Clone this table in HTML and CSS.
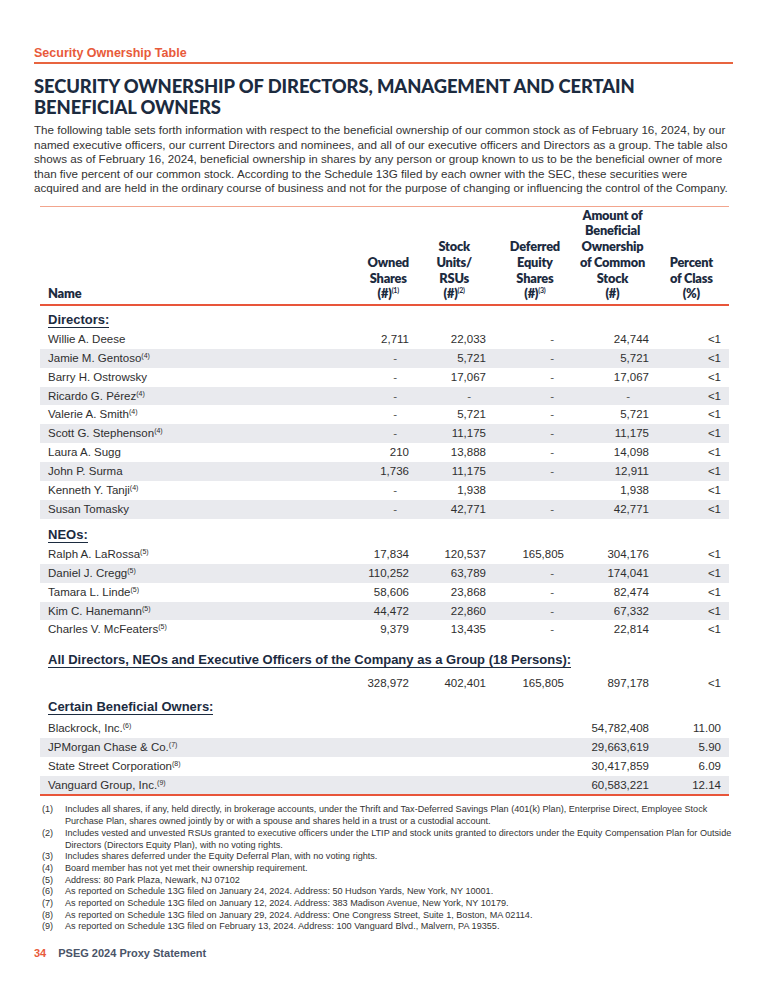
FILE: index.html
```html
<!DOCTYPE html>
<html lang="en">
<head>
<meta charset="utf-8">
<title>Security Ownership Table</title>
<link rel="stylesheet" href="styles.css">
</head>
<body>
<div class="page">
  <div class="section-label">Security Ownership Table</div>
  <h1 class="title">SECURITY OWNERSHIP OF DIRECTORS, MANAGEMENT AND CERTAIN<br>BENEFICIAL OWNERS</h1>
  <p class="intro">The following table sets forth information with respect to the beneficial ownership of our common stock as of February 16, 2024, by our<br>named executive officers, our current Directors and nominees, and all of our executive officers and Directors as a group. The table also<br>shows as of February 16, 2024, beneficial ownership in shares by any person or group known to us to be the beneficial owner of more<br>than five percent of our common stock. According to the Schedule 13G filed by each owner with the SEC, these securities were<br>acquired and are held in the ordinary course of business and not for the purpose of changing or influencing the control of the Company.</p>

  <table class="own">
    <colgroup>
      <col class="c-name"><col class="c-owned"><col class="c-stock"><col class="c-def"><col class="c-amt"><col class="c-pct">
    </colgroup>
    <thead>
      <tr>
        <th class="h-name">Name</th>
        <th class="h-owned"><span>Owned<br>Shares<br>(#)<sup>(1)</sup></span></th>
        <th class="h-stock"><span>Stock<br>Units/<br>RSUs<br>(#)<sup>(2)</sup></span></th>
        <th class="h-def"><span>Deferred<br>Equity<br>Shares<br>(#)<sup>(3)</sup></span></th>
        <th class="h-amt"><span>Amount of<br>Beneficial<br>Ownership<br>of Common<br>Stock<br>(#)</span></th>
        <th class="h-pct"><span>Percent<br>of Class<br>(%)</span></th>
      </tr>
    </thead>
    <tbody>
      <tr class="sec sec-dir"><td colspan="6"><span>Directors:</span></td></tr>
      <tr><td>Willie A. Deese</td><td>2,711</td><td>22,033</td><td class="dash d-def">-</td><td>24,744</td><td>&lt;1</td></tr>
      <tr class="alt"><td>Jamie M. Gentoso<sup>(4)</sup></td><td class="dash d-own">-</td><td>5,721</td><td class="dash d-def">-</td><td>5,721</td><td>&lt;1</td></tr>
      <tr><td>Barry H. Ostrowsky</td><td class="dash d-own">-</td><td>17,067</td><td class="dash d-def">-</td><td>17,067</td><td>&lt;1</td></tr>
      <tr class="alt"><td>Ricardo G. Pérez<sup>(4)</sup></td><td class="dash d-own">-</td><td class="dash d-stock">-</td><td class="dash d-def">-</td><td class="dash d-amt">-</td><td>&lt;1</td></tr>
      <tr><td>Valerie A. Smith<sup>(4)</sup></td><td class="dash d-own">-</td><td>5,721</td><td class="dash d-def">-</td><td>5,721</td><td>&lt;1</td></tr>
      <tr class="alt"><td>Scott G. Stephenson<sup>(4)</sup></td><td class="dash d-own">-</td><td>11,175</td><td class="dash d-def">-</td><td>11,175</td><td>&lt;1</td></tr>
      <tr><td>Laura A. Sugg</td><td>210</td><td>13,888</td><td class="dash d-def">-</td><td>14,098</td><td>&lt;1</td></tr>
      <tr class="alt"><td>John P. Surma</td><td>1,736</td><td>11,175</td><td class="dash d-def">-</td><td>12,911</td><td>&lt;1</td></tr>
      <tr><td>Kenneth Y. Tanji<sup>(4)</sup></td><td class="dash d-own">-</td><td>1,938</td><td></td><td>1,938</td><td>&lt;1</td></tr>
      <tr class="alt"><td>Susan Tomasky</td><td class="dash d-own">-</td><td>42,771</td><td class="dash d-def">-</td><td>42,771</td><td>&lt;1</td></tr>

      <tr class="sec sec-neo"><td colspan="6"><span>NEOs:</span></td></tr>
      <tr><td>Ralph A. LaRossa<sup>(5)</sup></td><td>17,834</td><td>120,537</td><td>165,805</td><td>304,176</td><td>&lt;1</td></tr>
      <tr class="alt"><td>Daniel J. Cregg<sup>(5)</sup></td><td>110,252</td><td>63,789</td><td class="dash d-def">-</td><td>174,041</td><td>&lt;1</td></tr>
      <tr><td>Tamara L. Linde<sup>(5)</sup></td><td>58,606</td><td>23,868</td><td class="dash d-def">-</td><td>82,474</td><td>&lt;1</td></tr>
      <tr class="alt"><td>Kim C. Hanemann<sup>(5)</sup></td><td>44,472</td><td>22,860</td><td class="dash d-def">-</td><td>67,332</td><td>&lt;1</td></tr>
      <tr><td>Charles V. McFeaters<sup>(5)</sup></td><td>9,379</td><td>13,435</td><td class="dash d-def">-</td><td>22,814</td><td>&lt;1</td></tr>

      <tr class="sec sec-all"><td colspan="6"><span>All Directors, NEOs and Executive Officers of the Company as a Group (18 Persons):</span></td></tr>
      <tr class="total"><td></td><td>328,972</td><td>402,401</td><td>165,805</td><td>897,178</td><td>&lt;1</td></tr>

      <tr class="sec sec-ben"><td colspan="6"><span>Certain Beneficial Owners:</span></td></tr>
      <tr><td>Blackrock, Inc.<sup>(6)</sup></td><td></td><td></td><td></td><td>54,782,408</td><td>11.00</td></tr>
      <tr class="alt"><td>JPMorgan Chase &amp; Co.<sup>(7)</sup></td><td></td><td></td><td></td><td>29,663,619</td><td>5.90</td></tr>
      <tr><td>State Street Corporation<sup>(8)</sup></td><td></td><td></td><td></td><td>30,417,859</td><td>6.09</td></tr>
      <tr class="alt last"><td>Vanguard Group, Inc.<sup>(9)</sup></td><td></td><td></td><td></td><td>60,583,221</td><td>12.14</td></tr>
    </tbody>
  </table>

  <ol class="notes">
    <li><span class="num">(1)</span><span class="txt">Includes all shares, if any, held directly, in brokerage accounts, under the Thrift and Tax-Deferred Savings Plan (401(k) Plan), Enterprise Direct, Employee Stock<br>Purchase Plan, shares owned jointly by or with a spouse and shares held in a trust or a custodial account.</span></li>
    <li><span class="num">(2)</span><span class="txt">Includes vested and unvested RSUs granted to executive officers under the LTIP and stock units granted to directors under the Equity Compensation Plan for Outside<br>Directors (Directors Equity Plan), with no voting rights.</span></li>
    <li><span class="num">(3)</span><span class="txt">Includes shares deferred under the Equity Deferral Plan, with no voting rights.</span></li>
    <li><span class="num">(4)</span><span class="txt">Board member has not yet met their ownership requirement.</span></li>
    <li><span class="num">(5)</span><span class="txt">Address: 80 Park Plaza, Newark, NJ 07102</span></li>
    <li><span class="num">(6)</span><span class="txt">As reported on Schedule 13G filed on January 24, 2024. Address: 50 Hudson Yards, New York, NY 10001.</span></li>
    <li><span class="num">(7)</span><span class="txt">As reported on Schedule 13G filed on January 12, 2024. Address: 383 Madison Avenue, New York, NY 10179.</span></li>
    <li><span class="num">(8)</span><span class="txt">As reported on Schedule 13G filed on January 29, 2024. Address: One Congress Street, Suite 1, Boston, MA 02114.</span></li>
    <li><span class="num">(9)</span><span class="txt">As reported on Schedule 13G filed on February 13, 2024. Address: 100 Vanguard Blvd., Malvern, PA 19355.</span></li>
  </ol>

  <div class="footer"><span class="pg">34</span><span class="doc">PSEG 2024 Proxy Statement</span></div>
</div>
</body>
</html>
```
FILE: styles.css
```css
html, body {
  margin: 0;
  padding: 0;
  background: #ffffff;
}
.page {
  width: 768px;
  box-sizing: border-box;
  padding: 46px 35px 0 34px;
  font-family: "Liberation Sans", Arial, sans-serif;
  color: #2e2e2e;
}
.section-label {
  font-family: "Liberation Sans", Arial, sans-serif;
  font-weight: bold;
  font-size: 12.5px;
  line-height: 15px;
  color: #e85a3a;
  padding-bottom: 1px;
  border-bottom: 2px solid #e8643f;
}
.title {
  margin: 12px 0 0 0;
  font-family: "Lato", "Liberation Sans", sans-serif;
  font-weight: 900;
  font-size: 18.4px;
  line-height: 21px;
  color: #1c2b3f;
  letter-spacing: -0.1px;
}
.intro {
  margin: 5px 0 0 0;
  font-size: 11.64px;
  line-height: 14.5px;
  color: #333333;
  white-space: nowrap;
}
.own {
  margin: 10px 0 0 6px;
  width: 689px;
  border-collapse: collapse;
  border-spacing: 0;
  table-layout: fixed;
  font-size: 11.5px;
}
.c-name { width: 300px; }
.c-owned { width: 77px; }
.c-stock { width: 77px; }
.c-def { width: 78px; }
.c-amt { width: 85px; }
.c-pct { width: 72px; }
.own thead tr {
  border-top: 1px solid #f2a58d;
  border-bottom: 2px solid #e8553a;
}
.own th {
  font-family: "Lato", "Liberation Sans", sans-serif;
  font-weight: 800;
  font-size: 12.8px;
  line-height: 15.8px;
  letter-spacing: -0.2px;
  color: #1c2b3f;
  vertical-align: bottom;
  text-align: right;
  padding: 1px 8px 2px 0;
}
.own th span {
  display: inline-block;
  text-align: center;
  white-space: nowrap;
}
.own th.h-name { text-align: left; padding-left: 8px; }
.own th.h-stock { padding-right: 22px; }
.own th.h-def { padding-right: 12px; }
.own th.h-amt { padding-right: 12px; }
.own th.h-pct { padding-right: 16px; }
.own th sup {
  font-size: 7px;
  vertical-align: 5px;
  line-height: 0;
  font-weight: 700;
}
.own td {
  height: 18.9px;
  line-height: 18.9px;
  padding: 0 8px;
  text-align: right;
  white-space: nowrap;
  color: #2e2e2e;
}
.own td:first-child { text-align: left; }
.own tr.alt td { background: #e9eaee; }
.own td sup {
  font-size: 7px;
  vertical-align: 4px;
  line-height: 0;
}
.own td.dash { color: #555555; }
.own td.d-own { padding-right: 20px; }
.own td.d-stock { padding-right: 23px; }
.own td.d-def { padding-right: 18px; }
.own td.d-amt { padding-right: 27px; }
.own tr.sec td {
  height: auto;
  text-align: left;
  font-weight: bold;
  font-size: 13px;
  line-height: 15px;
  color: #1c2b3f;
  padding-bottom: 3px;
}
.own tr.sec td span {
  border-bottom: 1.5px solid #1c2b3f;
}
.own tr.sec-dir td { padding-top: 5.5px; }
.own tr.sec-neo td { padding-top: 8px; }
.own tr.sec-all td { padding-top: 12.5px; }
.own tr.sec-ben td { padding-top: 2px; padding-bottom: 5px; }
.own tr.total td { padding-top: 4px; padding-bottom: 4px; }
.own tr.last { border-bottom: 2px solid #e8553a; }

.notes {
  list-style: none;
  margin: 8px 0 0 8px;
  padding: 0;
  font-size: 9.1px;
  line-height: 11.7px;
  color: #333333;
  letter-spacing: 0;
}
.notes li {
  display: flex;
}
.notes .num {
  width: 23px;
  flex: none;
}
.notes .txt {
  white-space: nowrap;
}
.footer {
  margin-top: 13px;
  display: flex;
  gap: 12px;
  font-weight: bold;
  font-size: 11px;
  line-height: 14px;
}
.footer .pg { color: #e85a3a; }
.footer .doc { color: #4a5468; }
```
